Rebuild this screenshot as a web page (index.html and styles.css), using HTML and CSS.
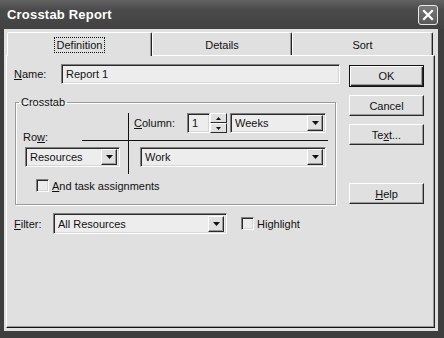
FILE: index.html
```html
<!DOCTYPE html>
<html lang="en">
<head>
  <meta charset="UTF-8">
  <title>Crosstab Report</title>
  <link rel="stylesheet" href="styles.css">
</head>
<body>
  <div class="window">
    <div class="titlebar">
      <span class="title">Crosstab Report</span>
      <span class="close">
        <svg width="12" height="12" viewBox="0 0 12 12" fill="none" stroke="#fff" stroke-width="2.2" stroke-linecap="square">
          <line x1="2" y1="2" x2="10" y2="10"></line>
          <line x1="10" y1="2" x2="2" y2="10"></line>
        </svg>
      </span>
    </div>
    <div class="frame">
      <div class="client">
        <div class="tabs">
          <div class="tab tab-definition active"><span class="focus">Definition</span></div>
          <div class="tab tab-details">Details</div>
          <div class="tab tab-sort">Sort</div>
        </div>
        <div class="panel">
          <div class="main">
            <div class="name-row">
              <label class="lbl name-lbl"><u>N</u>ame:</label>
              <div class="field name-field">Report 1</div>
            </div>

            <fieldset class="group">
              <legend>Crosstab</legend>
              <div class="cross">
                <div class="cell row-head">
                  <label class="lbl">Ro<u>w</u>:</label>
                  <span class="rule"></span>
                </div>
                <div class="cell col-head">
                  <label class="lbl col-lbl"><u>C</u>olumn:</label>
                  <div class="spin">
                    <div class="field spin-field">1</div>
                    <div class="spin-btns">
                      <span class="spin-btn"><svg width="5" height="3" viewBox="0 0 5 3"><polygon points="2.5,0 5,3 0,3" fill="#111"></polygon></svg></span>
                      <span class="spin-btn"><svg width="5" height="3" viewBox="0 0 5 3"><polygon points="0,0 5,0 2.5,3" fill="#111"></polygon></svg></span>
                    </div>
                  </div>
                  <div class="field select weeks">Weeks<span class="arrow"><svg width="7" height="4" viewBox="0 0 7 4"><polygon points="0,0 7,0 3.5,4" fill="#111"></polygon></svg></span></div>
                </div>
                <div class="cell row-body">
                  <div class="field select resources">Resources<span class="arrow"><svg width="7" height="4" viewBox="0 0 7 4"><polygon points="0,0 7,0 3.5,4" fill="#111"></polygon></svg></span></div>
                </div>
                <div class="cell col-body">
                  <div class="field select work">Work<span class="arrow"><svg width="7" height="4" viewBox="0 0 7 4"><polygon points="0,0 7,0 3.5,4" fill="#111"></polygon></svg></span></div>
                </div>
              </div>
              <label class="check assign"><span class="box"></span><span><u>A</u>nd task assignments</span></label>
            </fieldset>

            <div class="filter-row">
              <label class="lbl filter-lbl"><u>F</u>ilter:</label>
              <div class="field select filter">All Resources<span class="arrow"><svg width="7" height="4" viewBox="0 0 7 4"><polygon points="0,0 7,0 3.5,4" fill="#111"></polygon></svg></span></div>
              <label class="check highlight"><span class="box"></span><span>Hi<u>g</u>hlight</span></label>
            </div>
          </div>

          <div class="buttons">
            <div class="btn btn-default">OK</div>
            <div class="btn">Cancel</div>
            <div class="btn">Te<u>x</u>t...</div>
            <div class="btn btn-help"><u>H</u>elp</div>
          </div>
        </div>
      </div>
    </div>
  </div>
</body>
</html>
```

FILE: styles.css
```css
body {
  margin: 0;
  font-family: "Liberation Sans", Arial, sans-serif;
  font-size: 11px;
  color: #111;
  background: #3a3a3a;
}
.window {
  width: 444px;
  height: 338px;
  display: flex;
  flex-direction: column;
  background: #3e3e3e;
  overflow: hidden;
}
.titlebar {
  height: 29px;
  flex: none;
  display: flex;
  align-items: center;
  justify-content: space-between;
  padding: 0 6px 0 7px;
  background: linear-gradient(#626262, #4a4a4a 35%, #424242);
}
.title {
  color: #fff;
  font-weight: bold;
  font-size: 13px;
  letter-spacing: 0.2px;
}
.close {
  width: 18px;
  height: 18px;
  border: 1px solid #e8e8e8;
  border-radius: 3px;
  background: linear-gradient(#7a7a7a, #5a5a5a);
  display: flex;
  align-items: center;
  justify-content: center;
}
.frame {
  flex: 1;
  display: flex;
  padding: 0 6px 7px 4px;
}
.client {
  flex: 1;
  display: flex;
  flex-direction: column;
  background: #e0e0e0;
  padding: 3px 3px 3px 2px;
}

/* tabs */
.tabs {
  display: flex;
  height: 23px;
  padding-left: 1px;
}
.tab {
  box-sizing: border-box;
  height: 23px;
  padding-top: 6px;
  text-align: center;
  background: #e0e0e0;
  border-top: 1px solid #fff;
  border-left: 1px solid #fff;
  border-right: 1px solid #222;
  border-radius: 2px 2px 0 0;
  box-shadow: inset -1px 0 #9a9a9a;
}
.tab.active {
  height: 24px;
  position: relative;
  z-index: 1;
}
.tab-definition { width: 145px; }
.tab-details { width: 140px; }
.tab-sort { width: 141px; }
.focus {
  outline: 1px dotted #111;
  outline-offset: 1px;
  padding: 0 1px;
}

/* panel */
.panel {
  flex: 1;
  display: flex;
  gap: 9px;
  padding: 8px 10px 0 7px;
  border: 1px solid;
  border-color: #fff #222 #111 #fff;
  box-shadow: inset -1px -1px #9a9a9a;
}
.main {
  width: 326px;
}
.lbl {
  display: block;
  white-space: nowrap;
}

/* fields */
.field {
  box-sizing: border-box;
  height: 20px;
  display: flex;
  align-items: center;
  padding-left: 4px;
  background: #ededed;
  border: 1px solid;
  border-color: #808080 #fff #fff #808080;
  box-shadow: inset 1px 1px #2a2a2a, inset -1px -1px #d6d6d6;
  white-space: nowrap;
}
.select {
  padding-right: 2px;
}
.arrow {
  box-sizing: border-box;
  width: 16px;
  height: 16px;
  margin-left: auto;
  display: flex;
  align-items: center;
  justify-content: center;
  background: #e0e0e0;
  border: 1px solid;
  border-color: #fff #2a2a2a #2a2a2a #fff;
  box-shadow: inset -1px -1px #9a9a9a;
}

.name-row {
  display: flex;
  align-items: center;
}
.name-lbl { width: 47px; }
.name-field { width: 279px; }

/* crosstab group */
.group {
  margin: 12px 4px 0 1px;
  padding: 0 0 12px;
  min-width: 0;
  border: 1px solid #9a9a9a;
  box-shadow: 1px 1px #fff, inset 1px 1px #fff;
}
.group legend {
  margin-left: 3px;
  padding: 0 2px;
  line-height: 13px;
}
.cross {
  display: grid;
  grid-template-columns: 113px 1fr;
  padding-top: 4px;
}
.cell {
  display: flex;
}
.row-head {
  align-items: flex-end;
  padding-left: 7px;
  border-right: 1px solid #111;
}
.row-head .lbl {
  line-height: 11px;
  margin-bottom: -2px;
}
.rule {
  flex: 1;
  margin-left: 34px;
  border-bottom: 1px solid #111;
}
.col-head {
  align-items: center;
  padding: 0 0 7px 5px;
  margin-right: 7px;
  border-bottom: 1px solid #111;
}
.col-lbl { width: 53px; }
.spin {
  display: flex;
  width: 40px;
  height: 20px;
}
.spin-field {
  width: 23px;
  height: 20px;
}
.spin-btns {
  display: flex;
  flex-direction: column;
  width: 17px;
}
.spin-btn {
  box-sizing: border-box;
  height: 10px;
  display: flex;
  align-items: center;
  justify-content: center;
  background: #e0e0e0;
  border: 1px solid;
  border-color: #fff #2a2a2a #2a2a2a #fff;
}
.weeks {
  width: 96px;
  margin-left: 3px;
}
.row-body {
  padding: 6px 0 7px 9px;
  border-right: 1px solid #111;
}
.resources { width: 95px; }
.col-body {
  padding: 6px 0 0 11px;
}
.work { width: 186px; }

/* checkboxes */
.check {
  display: flex;
  align-items: center;
  gap: 3px;
  white-space: nowrap;
}
.box {
  box-sizing: border-box;
  width: 13px;
  height: 13px;
  background: #ececec;
  border: 1px solid;
  border-color: #808080 #fff #fff #808080;
  box-shadow: inset 1px 1px #2a2a2a, inset -1px -1px #d6d6d6;
}
.assign {
  margin: 5px 0 0 20px;
}

/* filter */
.filter-row {
  display: flex;
  align-items: center;
  margin-top: 8px;
}
.filter-lbl { width: 39px; }
.filter {
  width: 174px;
  height: 21px;
}
.highlight {
  margin-left: 14px;
}

/* buttons */
.buttons {
  display: flex;
  flex-direction: column;
  gap: 8px;
  padding-top: 1px;
}
.btn {
  box-sizing: border-box;
  width: 75px;
  height: 21px;
  display: flex;
  align-items: center;
  justify-content: center;
  background: #e0e0e0;
  border: 1px solid;
  border-color: #fff #2a2a2a #2a2a2a #fff;
  box-shadow: inset -1px -1px #9a9a9a;
}
.btn-default {
  height: 22px;
  border-color: #111;
  box-shadow: inset 1px 1px #fff, inset -1px -1px #2a2a2a, inset -2px -2px #9a9a9a;
}
.btn-help {
  margin-top: 30px;
}
```
